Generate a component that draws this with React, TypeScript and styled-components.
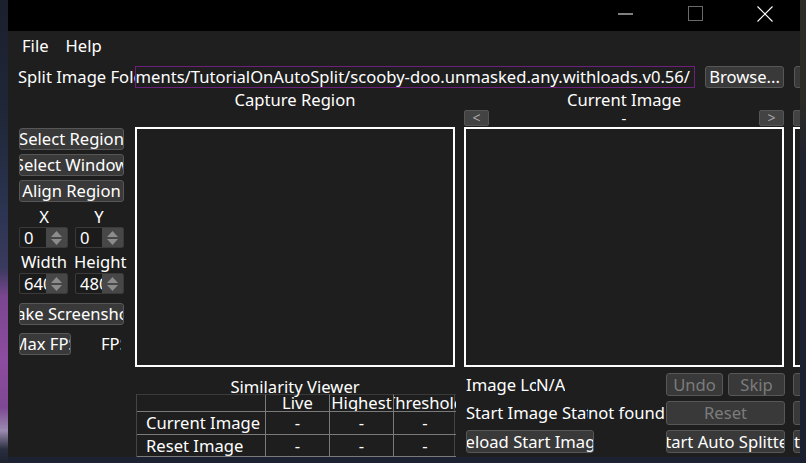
import React from 'react';
import styled, { createGlobalStyle } from 'styled-components';

const GlobalStyle = createGlobalStyle`
  html, body { margin: 0; padding: 0; background: #1c2230; }
  body {
    font-family: "Noto Sans", "Open Sans", sans-serif;
    font-size: 16.6px;
    color: #ffffff;
  }
  * { box-sizing: border-box; }
`;

const Desktop = styled.div`
  width: 806px;
  height: 463px;
  display: flex;
  align-items: flex-start;
  overflow: hidden;
  background: #1c2231;
`;

const WallEdge = styled.div`
  width: 8px;
  height: 463px;
  flex: none;
  background: linear-gradient(
    to bottom,
    #1a1f2c 0%,
    #1f2738 25%,
    #2b3450 45%,
    #3a3a5e 58%,
    #7a4690 64%,
    #8d4ca0 78%,
    #7e4893 88%,
    #9a8ab0 93%,
    #2a2f40 97%,
    #1c2230 100%
  );
`;

const RightEdge = styled.div`
  width: 6px;
  height: 463px;
  flex: none;
  background: linear-gradient(to bottom, #2d2c26 0%, #2b2a25 22%, #1f2330 35%, #1b2030 100%);
`;

const Window = styled.div`
  width: 792px;
  height: 457px;
  flex: none;
  background: #1e1e1e;
  display: flex;
  flex-direction: column;
  overflow: hidden;
`;

const TitleBar = styled.div`
  height: 31px;
  flex: none;
  background: #000;
  display: flex;
  justify-content: flex-end;
`;

const CaptionButton = styled.div`
  width: 70px;
  height: 31px;
  display: flex;
  align-items: center;
  justify-content: center;
  padding-bottom: 4px;
`;

const MenuBar = styled.div`
  height: 28px;
  flex: none;
  display: flex;
  align-items: center;
  gap: 17px;
  padding-left: 14px;
  padding-top: 1px;
  background: #1f1f1f;
`;

const MenuItem = styled.span`
  line-height: 22px;
  white-space: nowrap;
`;

const Body = styled.div`
  flex: 1;
  display: flex;
  flex-direction: column;
  padding-left: 10px;
  min-height: 0;
`;

const TopRow = styled.div`
  display: flex;
  align-items: center;
  height: 22px;
  margin-top: 7px;
  flex: none;
`;

const Label = styled.div<{ $w?: number; $clip?: boolean }>`
  ${(p) => (p.$w ? `width: ${p.$w}px; flex: none;` : '')}
  white-space: nowrap;
  overflow: ${(p) => (p.$clip === false ? 'visible' : 'hidden')};
  line-height: 22px;
  height: 22px;
`;

const PathField = styled.div`
  width: 560px;
  height: 22px;
  flex: none;
  border: 1px solid #6e1f7e;
  background: #1e1e1e;
  display: flex;
  justify-content: flex-end;
  align-items: center;
  overflow: hidden;
  padding-right: 4px;
  white-space: nowrap;
  line-height: 20px;
`;

const QtButton = styled.div<{ $w?: number; $h?: number; $disabled?: boolean; $ml?: number; $left?: boolean }>`
  ${(p) => (p.$w ? `width: ${p.$w}px;` : 'width: 100%;')}
  height: ${(p) => p.$h ?? 22}px;
  flex: none;
  margin-left: ${(p) => p.$ml ?? 0}px;
  background: #393939;
  border: 1px solid #575757;
  border-radius: 3px;
  color: ${(p) => (p.$disabled ? '#7c7c7c' : '#ffffff')};
  display: flex;
  align-items: center;
  justify-content: ${(p) => (p.$left ? 'flex-start' : 'center')};
  overflow: hidden;
  white-space: nowrap;
  line-height: 20px;
`;

const Main = styled.div`
  display: flex;
  align-items: flex-start;
  flex: none;
`;

const LeftCol = styled.div`
  width: 106px;
  flex: none;
  display: flex;
  flex-direction: column;
  padding-top: 40px;
  padding-left: 1px;
`;

const Stack = styled.div<{ $gap: number; $mt?: number }>`
  display: flex;
  flex-direction: column;
  gap: ${(p) => p.$gap}px;
  margin-top: ${(p) => p.$mt ?? 0}px;
`;

const PairRow = styled.div<{ $mt?: number; $h?: number }>`
  display: flex;
  justify-content: space-between;
  align-items: center;
  height: ${(p) => p.$h ?? 21}px;
  margin-top: ${(p) => p.$mt ?? 0}px;
`;

const SmallLabel = styled.div`
  width: 50px;
  text-align: center;
  white-space: nowrap;
  overflow: visible;
  line-height: 20px;
`;

const SpinBox = styled.div`
  width: 49px;
  height: 21px;
  display: flex;
  border: 1px solid #3a3a3a;
  background: #1b1b1b;
  border-radius: 2px;
  overflow: hidden;
`;

const SpinText = styled.div`
  flex: 1;
  overflow: hidden;
  white-space: nowrap;
  padding-left: 4px;
  line-height: 19px;
`;

const SpinArrows = styled.div`
  width: 21px;
  flex: none;
  background: #474747;
  display: flex;
  flex-direction: column;
  align-items: center;
  justify-content: center;
  gap: 2px;
`;

const FpsRow = styled.div`
  display: flex;
  align-items: center;
  margin-top: 8px;
  height: 22px;
`;

const FpsLabel = styled.div`
  width: 20px;
  margin-left: 30px;
  overflow: hidden;
  white-space: nowrap;
  line-height: 20px;
`;

const Column = styled.div<{ $w: number; $ml: number }>`
  width: ${(p) => p.$w}px;
  flex: none;
  margin-left: ${(p) => p.$ml}px;
  display: flex;
  flex-direction: column;
`;

const ColTitle = styled.div<{ $h: number; $pt: number }>`
  height: ${(p) => p.$h}px;
  padding-top: ${(p) => p.$pt}px;
  line-height: 20px;
  text-align: center;
  white-space: nowrap;
  overflow: visible;
  position: relative;
  z-index: 1;
`;

const NavRow = styled.div`
  height: 17px;
  display: flex;
  justify-content: space-between;
  align-items: flex-start;
`;

const NavButton = styled.div`
  width: 25px;
  height: 16px;
  background: #434343;
  border: 1px solid #555;
  border-radius: 2px;
  color: #a9a9a9;
  font-size: 14px;
  line-height: 13px;
  display: flex;
  justify-content: center;
  overflow: hidden;
`;

const NavDash = styled.div`
  line-height: 14px;
  font-size: 15px;
  padding-top: 1px;
`;

const ImageBox = styled.div`
  height: 240px;
  border: 2px solid #ffffff;
  background: #1e1e1e;
`;

const Table = styled.div`
  margin-left: 1px;
  display: grid;
  grid-template-columns: 129px 64px 64px 62px;
  grid-template-rows: 18px 23px 22px;
  border-left: 1px solid #444;
  border-right: 1px solid #444;
`;

const Cell = styled.div<{ $head?: boolean; $first?: boolean; $last?: boolean }>`
  border-right: ${(p) => (p.$last ? 'none' : '1px solid #7a7a7a')};
  border-bottom: 1px solid #7a7a7a;
  overflow: hidden;
  white-space: nowrap;
  line-height: 20px;
  display: flex;
  justify-content: ${(p) => (p.$first ? 'flex-start' : 'center')};
  align-items: ${(p) => (p.$head ? 'flex-start' : 'center')};
  padding-left: ${(p) => (p.$first ? 9 : 0)}px;
  ${(p) => (p.$head ? 'border-top: 1px solid #3a3a3a;' : '')}
`;

const HeadText = styled.span`
  margin-top: -2px;
`;

const BottomGrid = styled.div`
  display: grid;
  grid-template-columns: 200px 119px;
  grid-template-rows: 23px 24px 23px;
  row-gap: 5px;
  margin-top: 6px;
  padding-left: 2px;
`;

const ButtonPair = styled.div`
  display: flex;
  gap: 5px;
`;

const LabelPair = styled.div`
  display: flex;
  align-items: center;
  height: 23px;
`;

const ExtraStack = styled.div`
  display: flex;
  flex-direction: column;
  gap: 5px;
  margin-top: 6px;
`;

const Arrow = ({ up }: { up?: boolean }) => (
  <svg width="11" height="6" viewBox="0 0 11 6">
    <polygon points={up ? '0,6 5.5,0 11,6' : '0,0 5.5,6 11,0'} fill="#8c8c8c" />
  </svg>
);

const Spin = ({ value }: { value: string }) => (
  <SpinBox>
    <SpinText>{value}</SpinText>
    <SpinArrows>
      <Arrow up />
      <Arrow />
    </SpinArrows>
  </SpinBox>
);

export default function App() {
  return (
    <>
      <GlobalStyle />
      <Desktop>
        <WallEdge />
        <Window>
          <TitleBar>
            <CaptionButton>
              <svg width="15" height="2" viewBox="0 0 15 2">
                <line x1="0" y1="1" x2="15" y2="1" stroke="#ffffff" strokeWidth="1" />
              </svg>
            </CaptionButton>
            <CaptionButton>
              <svg width="15" height="15" viewBox="0 0 15 15">
                <rect x="0.5" y="0.5" width="14" height="14" fill="none" stroke="#6a6a6a" strokeWidth="1" />
              </svg>
            </CaptionButton>
            <CaptionButton>
              <svg width="16" height="16" viewBox="0 0 16 16">
                <line x1="0.5" y1="0.5" x2="15.5" y2="15.5" stroke="#ffffff" strokeWidth="1.1" />
                <line x1="15.5" y1="0.5" x2="0.5" y2="15.5" stroke="#ffffff" strokeWidth="1.1" />
              </svg>
            </CaptionButton>
          </TitleBar>
          <MenuBar>
            <MenuItem>File</MenuItem>
            <MenuItem>Help</MenuItem>
          </MenuBar>
          <Body>
            <TopRow>
              <Label $w={117}>Split Image Folder</Label>
              <PathField>
                C:/Users/Avasam/Documents/TutorialOnAutoSplit/scooby-doo.unmasked.any.withloads.v0.56/
              </PathField>
              <QtButton $w={79} $ml={10}>Browse...</QtButton>
              <QtButton $w={30} $ml={10} />
            </TopRow>
            <Main>
              <LeftCol>
                <Stack $gap={4}>
                  <QtButton>Select Region</QtButton>
                  <QtButton>Select Window</QtButton>
                  <QtButton>Align Region</QtButton>
                </Stack>
                <PairRow $mt={5} $h={20}>
                  <SmallLabel>X</SmallLabel>
                  <SmallLabel>Y</SmallLabel>
                </PairRow>
                <PairRow>
                  <Spin value="0" />
                  <Spin value="0" />
                </PairRow>
                <PairRow $mt={3} $h={22}>
                  <SmallLabel>Width</SmallLabel>
                  <SmallLabel>Height</SmallLabel>
                </PairRow>
                <PairRow>
                  <Spin value="640" />
                  <Spin value="480" />
                </PairRow>
                <Stack $gap={0} $mt={9}>
                  <QtButton>Take Screenshot</QtButton>
                </Stack>
                <FpsRow>
                  <QtButton $w={52}>Max FPS</QtButton>
                  <FpsLabel>FPS</FpsLabel>
                </FpsRow>
              </LeftCol>

              <Column $w={320} $ml={11}>
                <ColTitle $h={39} $pt={2}>Capture Region</ColTitle>
                <ImageBox />
                <ColTitle $h={27} $pt={10}>Similarity Viewer</ColTitle>
                <Table>
                  <Cell $head $first />
                  <Cell $head><HeadText>Live</HeadText></Cell>
                  <Cell $head><HeadText>Highest</HeadText></Cell>
                  <Cell $head $last><HeadText>Threshold</HeadText></Cell>
                  <Cell $first>Current Image</Cell>
                  <Cell>-</Cell>
                  <Cell>-</Cell>
                  <Cell $last>-</Cell>
                  <Cell $first>Reset Image</Cell>
                  <Cell>-</Cell>
                  <Cell>-</Cell>
                  <Cell $last>-</Cell>
                </Table>
              </Column>

              <Column $w={320} $ml={9}>
                <ColTitle $h={22} $pt={2}>Current Image</ColTitle>
                <NavRow>
                  <NavButton>&lt;</NavButton>
                  <NavDash>-</NavDash>
                  <NavButton>&gt;</NavButton>
                </NavRow>
                <ImageBox />
                <BottomGrid>
                  <LabelPair>
                    <Label $w={70}>Image Loop</Label>
                    <Label>N/A</Label>
                  </LabelPair>
                  <ButtonPair>
                    <QtButton $disabled $w={57} $h={23}>Undo</QtButton>
                    <QtButton $disabled $w={57} $h={23}>Skip</QtButton>
                  </ButtonPair>
                  <LabelPair>
                    <Label $w={122}>Start Image Status</Label>
                    <Label $clip={false}>not found</Label>
                  </LabelPair>
                  <QtButton $disabled $h={24}>Reset</QtButton>
                  <QtButton $w={128} $h={23}>Reload Start Image</QtButton>
                  <QtButton $h={23}>Start Auto Splitter</QtButton>
                </BottomGrid>
              </Column>

              <Column $w={40} $ml={9}>
                <ColTitle $h={22} $pt={0} />
                <NavRow>
                  <NavButton />
                </NavRow>
                <ImageBox />
                <ExtraStack>
                  <QtButton $h={23} />
                  <QtButton $h={24} />
                  <QtButton $h={23} $left>te</QtButton>
                </ExtraStack>
              </Column>
            </Main>
          </Body>
        </Window>
        <RightEdge />
      </Desktop>
    </>
  );
}
